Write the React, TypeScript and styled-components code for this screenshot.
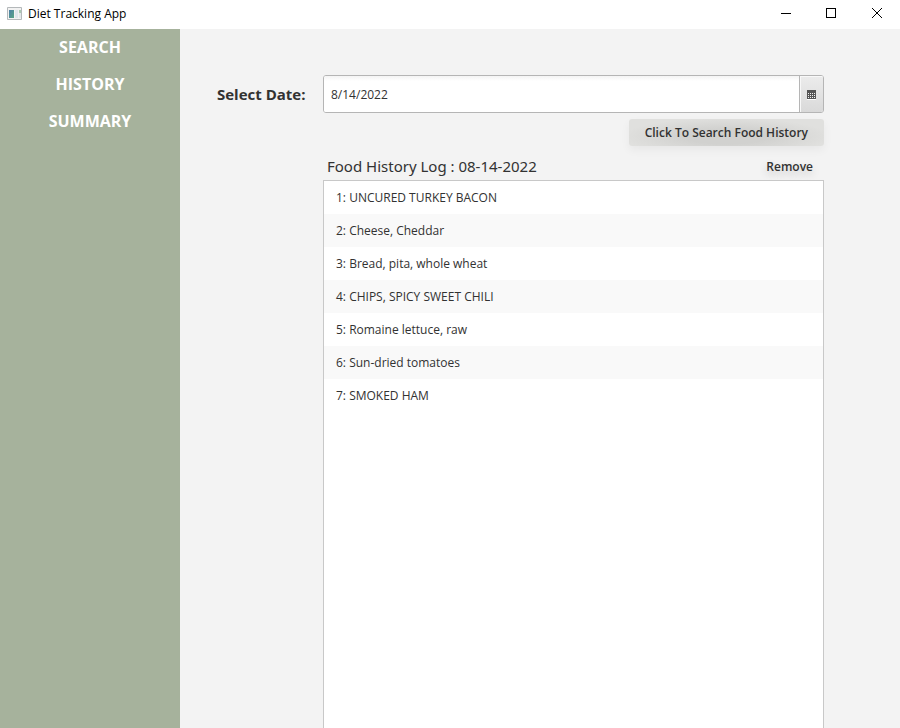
import React, { useState } from "react";
import styled, { createGlobalStyle } from "styled-components";

const GlobalStyle = createGlobalStyle`
  * { box-sizing: border-box; }
  body {
    margin: 0;
    font-family: "Open Sans", "Noto Sans", sans-serif;
    font-size: 12px;
    color: #323232;
    background: #f3f3f3;
  }
  button, input { font: inherit; color: inherit; }
`;

const Window = styled.div`
  display: flex;
  flex-direction: column;
  height: 100vh;
  overflow: hidden;
`;

const TitleBar = styled.header`
  display: flex;
  align-items: center;
  flex: none;
  height: 29px;
  padding-left: 7px;
  background: #ffffff;
  color: #000000;
`;

const AppIcon = styled.svg`
  width: 15px;
  height: 13px;
  margin: 0 6px 3px 0;
`;

const AppTitle = styled.h1`
  flex: 1;
  margin: 0;
  font-size: 12px;
  line-height: 16px;
  font-weight: 400;
  padding-bottom: 1px;
`;

const WindowButton = styled.button`
  display: flex;
  align-items: center;
  justify-content: center;
  width: 46px;
  height: 29px;
  padding: 0 0 3px;
  border: 0;
  background: transparent;
`;

const Body = styled.div`
  display: flex;
  flex: 1;
  min-height: 0;
`;

const Sidebar = styled.nav`
  display: flex;
  flex-direction: column;
  flex: none;
  width: 180px;
  background: #a6b29c;
`;

const NavButton = styled.button`
  height: 37px;
  padding: 0 0 2px;
  border: 0;
  background: transparent;
  color: #ffffff;
  font-size: 16px;
  font-weight: 700;
`;

const Content = styled.main`
  display: grid;
  flex: 1;
  grid-template-columns: 106px minmax(0, 1fr);
  grid-template-rows: auto auto auto 1fr;
  padding: 46px 76px 0 37px;
`;

const DateLabel = styled.label`
  align-self: center;
  font-size: 15px;
  font-weight: 700;
  white-space: nowrap;
`;

const DateField = styled.div`
  display: flex;
  height: 38px;
  border: 1px solid #b5b5b5;
  border-radius: 3px;
  background: #ffffff;
  overflow: hidden;
`;

const DateInput = styled.input`
  flex: 1;
  min-width: 0;
  padding: 0 7px;
  border: 0;
  outline: 0;
  background: linear-gradient(#f4f4f4, #ffffff 5px);
`;

const CalendarButton = styled.button`
  display: flex;
  align-items: center;
  justify-content: center;
  width: 24px;
  padding: 2px 0 0;
  border: 0;
  border-left: 1px solid #b5b5b5;
  background: linear-gradient(#ececec, #d9d9d9);
  box-shadow: inset 1px 1px 0 #f8f8f8;
`;

const SearchButton = styled.button`
  grid-column: 2;
  justify-self: end;
  height: 27px;
  margin-top: 6px;
  padding: 0 16px;
  border: 0;
  border-radius: 3px;
  background: radial-gradient(ellipse at 50% 65%, #d1d1cf 30%, #e0e0de 75%);
  box-shadow: 0 4px 10px rgba(0, 0, 0, 0.05);
  font-weight: 600;
`;

const LogHeader = styled.div`
  display: flex;
  grid-column: 2;
  align-items: center;
  justify-content: space-between;
  height: 34px;
  padding: 6px 11px 0 4px;
`;

const LogTitle = styled.h2`
  margin: 0;
  font-family: "Noto Sans", sans-serif;
  font-size: 15px;
  line-height: 20px;
  font-weight: 400;
`;

const RemoveButton = styled.button`
  padding: 0;
  border: 0;
  background: transparent;
  font-weight: 600;
  text-shadow: 0 4px 8px rgba(0, 0, 0, 0.2);
`;

const FoodList = styled.ol`
  grid-column: 2;
  margin: 0;
  padding: 0;
  border: 1px solid #c8c8c8;
  border-bottom: 0;
  background: #ffffff;
  list-style: none;
  overflow: auto;
`;

const FoodItem = styled.li`
  height: 33px;
  padding: 0 12px;
  line-height: 33px;

  &:nth-child(even) { background: #f9f9f9; }
`;

const pages = ["SEARCH", "HISTORY", "SUMMARY"];

const foods = [
  "UNCURED TURKEY BACON",
  "Cheese, Cheddar",
  "Bread, pita, whole wheat",
  "CHIPS, SPICY SWEET CHILI",
  "Romaine lettuce, raw",
  "Sun-dried tomatoes",
  "SMOKED HAM",
];

const CalendarIcon = () => (
  <svg width="9" height="10" viewBox="0 0 9 10" shapeRendering="crispEdges" aria-hidden="true">
    <path d="M0 9h9v1H0z" fill="#ffffff" />
    <path d="M0 0h9v9H0z" fill="#555555" />
    {[3, 5, 7].map((y) =>
      [1, 3, 5, 7].map((x) => <rect key={`${x}-${y}`} x={x} y={y} width="1" height="1" fill="#f0f0f0" />)
    )}
  </svg>
);

export default function App() {
  const [date, setDate] = useState("8/14/2022");

  return (
    <>
      <GlobalStyle />
      <Window>
        <TitleBar>
          <AppIcon viewBox="0 0 15 13" aria-hidden="true">
            <defs>
              <linearGradient id="pane" x1="0" y1="0" x2="1" y2="1">
                <stop offset="0" stopColor="#4c7fa8" />
                <stop offset="1" stopColor="#58a583" />
              </linearGradient>
            </defs>
            <path d="M0.5 0.5h14v12h-14z" fill="#f2f2f2" stroke="#b4b8ba" />
            <path d="M2 3h5v8H2z" fill="url(#pane)" />
            <path d="M8 3h3v8H8z" fill="#dfe6ec" />
            <path d="M12 3h2v3h-2z" fill="#a9c9b2" />
            <path d="M12 6h2v5h-2z" fill="#e3e7ea" />
          </AppIcon>
          <AppTitle>Diet Tracking App</AppTitle>
          <WindowButton aria-label="Minimize">
            <svg width="11" height="11" shapeRendering="crispEdges"><path d="M1 5h10v1H1z" /></svg>
          </WindowButton>
          <WindowButton aria-label="Maximize">
            <svg width="11" height="11" shapeRendering="crispEdges">
              <path d="M.5.5h9v9h-9z" fill="none" stroke="#000" />
            </svg>
          </WindowButton>
          <WindowButton aria-label="Close">
            <svg width="11" height="11"><path d="M0 0l10 10M10 0l-10 10" fill="none" stroke="#000" /></svg>
          </WindowButton>
        </TitleBar>
        <Body>
          <Sidebar>
            {pages.map((page) => (
              <NavButton key={page}>{page}</NavButton>
            ))}
          </Sidebar>
          <Content>
            <DateLabel htmlFor="date">Select Date:</DateLabel>
            <DateField>
              <DateInput id="date" value={date} onChange={(e) => setDate(e.target.value)} />
              <CalendarButton aria-label="Open calendar">
                <CalendarIcon />
              </CalendarButton>
            </DateField>
            <SearchButton>Click To Search Food History</SearchButton>
            <LogHeader>
              <LogTitle>Food History Log : 08-14-2022</LogTitle>
              <RemoveButton>Remove</RemoveButton>
            </LogHeader>
            <FoodList>
              {foods.map((food, index) => (
                <FoodItem key={food}>{`${index + 1}: ${food}`}</FoodItem>
              ))}
            </FoodList>
          </Content>
        </Body>
      </Window>
    </>
  );
}
